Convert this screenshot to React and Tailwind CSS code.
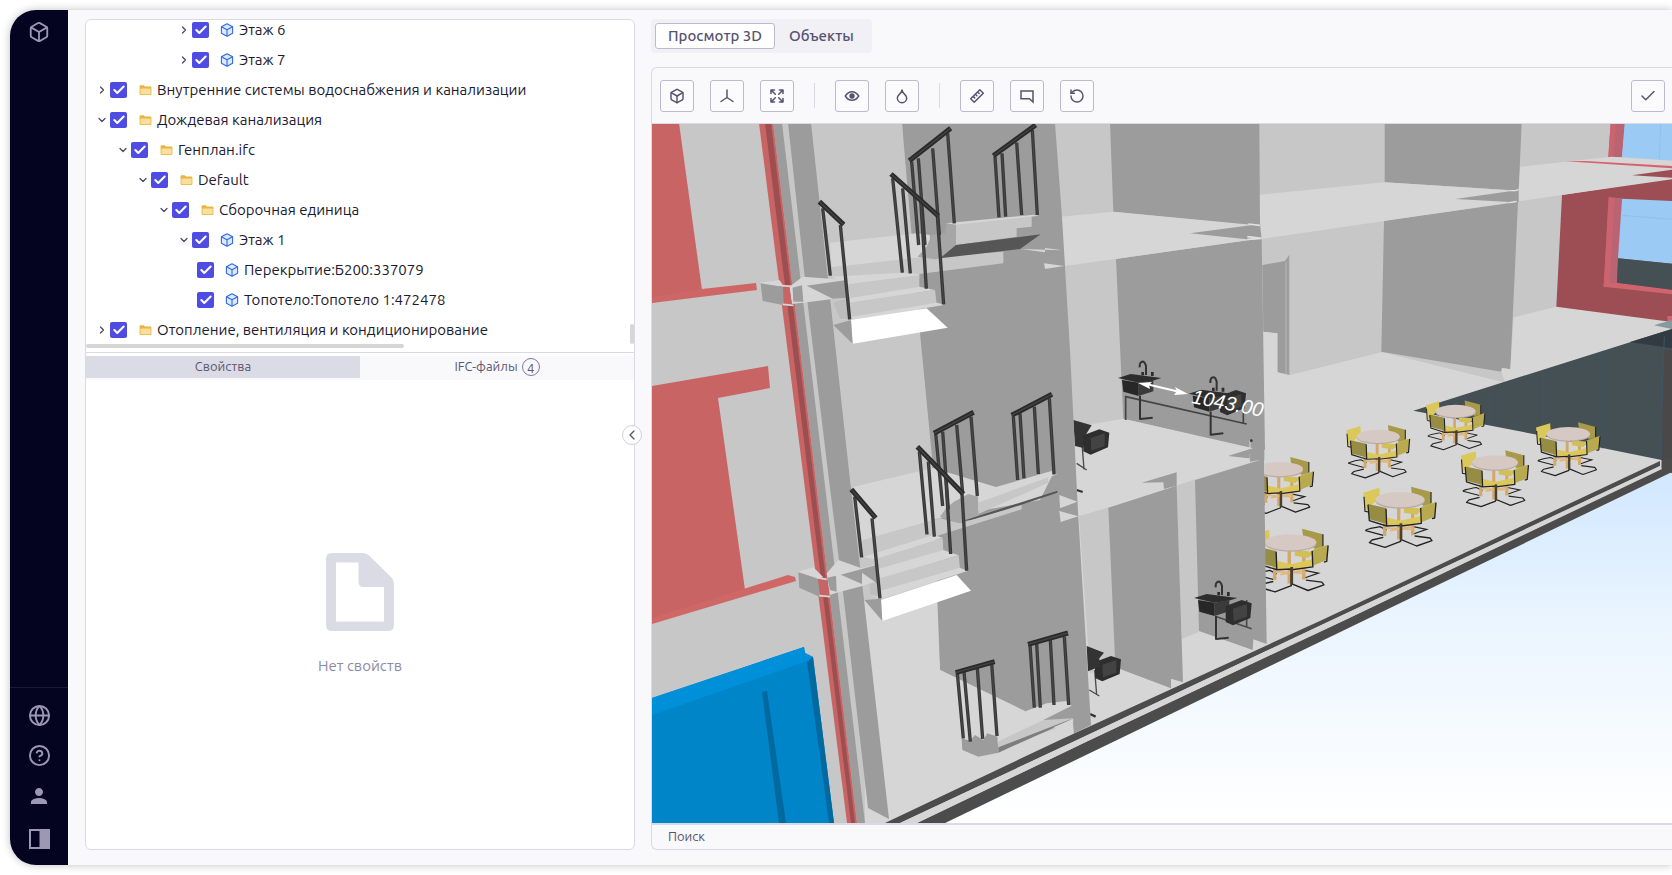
import { Box, Check, ChevronDown, ChevronLeft, ChevronRight, CircleHelp, Droplet, Globe, RotateCcw } from "lucide-react";
import { MdPerson } from "react-icons/md";

const INDENT = ["pl-[10px]", "pl-[31px]", "pl-[51px]", "pl-[72px]", "pl-[92px]", "pl-[111px]"];

const ROWS = [
  { level: 4, open: false, kind: "cube", label: "Этаж 6" },
  { level: 4, open: false, kind: "cube", label: "Этаж 7" },
  { level: 0, open: false, kind: "folder", label: "Внутренние системы водоснабжения и канализации" },
  { level: 0, open: true, kind: "folder", label: "Дождевая канализация" },
  { level: 1, open: true, kind: "folder", label: "Генплан.ifc" },
  { level: 2, open: true, kind: "folder", label: "Default" },
  { level: 3, open: true, kind: "folder", label: "Сборочная единица" },
  { level: 4, open: true, kind: "cube", label: "Этаж 1" },
  { level: 5, leaf: true, kind: "cube", label: "Перекрытие:Б200:337079" },
  { level: 5, leaf: true, kind: "cube", label: "Топотело:Топотело 1:472478" },
  { level: 0, open: false, kind: "folder", label: "Отопление, вентиляция и кондиционирование" },
];

function FolderIcon() {
  return (
    <svg viewBox="0 0 13 12" className="h-3 w-[13px]">
      <path d="M.6 2.2Q.6 1.2 1.6 1.2H4.6L6 2.6H11.4Q12.4 2.6 12.4 3.6V10Q12.4 11 11.4 11H1.6Q.6 11 .6 10Z" fill="#e9b440" />
      <path d="M2.6 4.6H11.6V10.2H1.4V5.8Q1.4 4.6 2.6 4.6Z" fill="#f8df9d" />
    </svg>
  );
}

function CubeIcon() {
  return (
    <svg viewBox="0 0 14 14" className="h-[14px] w-[14px]" stroke="#3268e0" strokeWidth="1.1" strokeLinejoin="round">
      <path d="M7 .8L12.6 3.8V10.2L7 13.2L1.4 10.2V3.8Z" fill="#dbeafe" />
      <path d="M1.4 3.8L7 6.8L12.6 3.8M7 6.8V13.2" fill="none" />
    </svg>
  );
}

function TreeRow({ row, index }) {
  const id = "node-" + index;
  const Chevron = row.open ? ChevronDown : ChevronRight;
  return (
    <li className={"flex h-[30px] items-center " + INDENT[row.level]}>
      {row.leaf ? null : (
        <button type="button" aria-label="Развернуть" className="mr-0.5 grid h-4 w-3 place-items-center text-[#4a4766]">
          <Chevron className="h-3 w-3" strokeWidth={2.5} />
        </button>
      )}
      <span className="grid h-4 w-[17px] place-items-center">
        <input id={id} type="checkbox" defaultChecked className="col-start-1 row-start-1 h-4 w-[17px] appearance-none rounded-[2px] bg-[#4f4ce4]" />
        <Check className="pointer-events-none col-start-1 row-start-1 h-[14px] w-[14px] text-white" strokeWidth={3.5} />
      </span>
      <label htmlFor={id} className="ml-2.5 flex items-center gap-1 whitespace-nowrap text-[15px] text-[#1c1a30]">
        <span className="grid w-4 place-items-center">{row.kind === "folder" ? <FolderIcon /> : <CubeIcon />}</span>
        {row.label}
      </label>
    </li>
  );
}

function ToolButton({ label, children }) {
  return (
    <button type="button" aria-label={label} className="grid h-8 w-[34px] shrink-0 place-items-center rounded-[3px] border border-[#bdbad0] bg-[#fbfbfd] text-[#56536f]">
      {children}
    </button>
  );
}

const STROKE = { fill: "none", stroke: "currentColor", strokeWidth: 1.5, strokeLinecap: "round", strokeLinejoin: "round" };

function AxesIcon() {
  return <svg viewBox="0 0 16 16" className="h-4 w-4" {...STROKE}><path d="M8 2V9.500L2 13.500M8 9.500L14 13.500" /></svg>;
}
function FitIcon() {
  return (
    <svg viewBox="0 0 16 16" className="h-4 w-4" {...STROKE}>
      <path d="M2 5.5V2H5.5M10.5 2H14V5.5M14 10.5V14H10.5M5.5 14H2V10.5M2.3 2.3L6.3 6.3M13.7 2.3L9.7 6.3M2.3 13.7L6.3 9.7M13.7 13.7L9.7 9.7" />
    </svg>
  );
}
function EyeIcon() {
  return (
    <svg viewBox="0 0 16 16" className="h-4 w-4" {...STROKE}>
      <path d="M1.3 8Q4 3.7 8 3.7T14.7 8Q12 12.3 8 12.3T1.3 8Z" />
      <circle cx="8" cy="8" r="1.9" fill="currentColor" />
    </svg>
  );
}
function RulerIcon() {
  return (
    <svg viewBox="0 0 16 16" className="h-4 w-4" {...STROKE}>
      <path d="M1.7 10.8L10.8 1.7L14.3 5.2L5.2 14.3ZM4.2 8.4L5.7 9.9M6.4 6.2L7.9 7.7M8.6 4L10.1 5.5" />
    </svg>
  );
}
function NoteIcon() {
  return <svg viewBox="0 0 16 16" className="h-4 w-4" {...STROKE}><path d="M2 3H14V14L10.5 10.8H2Z" strokeLinejoin="miter" /></svg>;
}

function P({ d, f }) {
  return <polygon points={d} fill={f} />;
}
const L = "#c7c7c7";
const F = "#d6d6d6";
const D = "#9c9c9c";

const TABLES = [
  [617, 334, 0.81], [955, 402, 0.88], [385, 410, 0.87], [735, 488, 0.93],
  [90, 508, 0.93], [450, 600, 1], [122, 728, 1.04],
];

function Table({ x, y, s }) {
  return (
    <g transform={"translate(" + x + " " + y + ") scale(" + s + ")"}>
      <P d="-110,-22 -62,-37 -60,-8 -104,32" f="#dcc85a" />
      <P d="33,-40 93,-24 92,12 70,18 36,-16" f="#a89a48" />
      <path d="M-108 -10L-105 34L-75 40M93 -24V10M-103 92Q-106 88 -60 80L-40 90M-103 92L-50 106M40 80L80 88L40 102" fill="none" stroke="#222" strokeWidth="3.5" />
      <path d="M-46 30V108M-4 20V118M38 30V106" stroke="#d3a869" strokeWidth="10" />
      <path d="M-40 84L40 88M-30 92L36 80" stroke="#e0b679" strokeWidth="5" />
      <P d="-40,52 0,62 2,76 -40,78 -46,60" f="#dcc85a" />
      <P d="0,62 62,48 66,68 4,78" f="#dcc85a" />
      <P d="12,22 70,26 50,44 12,38" f="#d2bf55" />
      <ellipse cx="0" cy="3" rx="74" ry="23" fill="#b9aca6" />
      <ellipse cx="0" cy="-1" rx="74" ry="23" fill="#d6c9c3" />
      <P d="-96,12 -42,24 -40,72 -92,58" f="#978c44" />
      <P d="62,22 108,6 104,50 66,66" f="#b9aa50" />
      <path d="M-96 14L-92 62L-40 78L2 76V124L-45 142L-92 128L-84 120L-50 112M-42 26L-40 76M62 24L64 70L4 78M108 8L104 54L96 56M2 118L50 138L96 122L90 114L44 108" fill="none" stroke="#222" strokeWidth="4" strokeLinejoin="round" />
      <path d="M3 70V122" stroke="#4a3f30" strokeWidth="8" />
    </g>
  );
}

function Rail({ bar, posts }) {
  return (
    <g fill="none">
      <path d={posts} stroke="#383838" strokeWidth="10" />
      <path d={posts} stroke="#525252" strokeWidth="2" />
      <path d={bar} stroke="#2a2a2a" strokeWidth="15" />
      <path d={bar} stroke="#444" strokeWidth="4" />
    </g>
  );
}

function Sink({ x, y }) {
  return (
    <g transform={"translate(" + x + " " + y + ")"}>
      <path d="M120 138V207L158 203M138 75V48Q134 31 124 36Q118 40 119 52" fill="none" stroke="#333" strokeWidth="6" strokeLinejoin="round" />
      <P d="54,84 92,72 184,84 158,92 116,98" f="#2d2d2d" />
      <P d="66,90 116,98 116,138 70,125" f="#272727" />
      <P d="116,98 160,90 160,124 116,138" f="#3b3b3b" />
      <path d="M128 76V66M157 78V66" stroke="#2b2b2b" strokeWidth="8" />
    </g>
  );
}

function SmallBasin({ x, y }) {
  return (
    <g transform={"translate(" + x + " " + y + ")"}>
      <P d="0,18 48,0 78,10 74,54 22,76 0,66" f="#2e2e2e" />
      <P d="22,26 64,12 64,50 24,64" f="#434343" />
    </g>
  );
}

function Scene() {
  return (
    <svg viewBox="652 124 1020 699" preserveAspectRatio="xMinYMin slice" className="h-full w-full" role="img" aria-label="3D-модель здания">
      <defs>
        <linearGradient id="sky" x1="0" y1="0" x2="0" y2="1">
          <stop offset="0.45" stopColor="#cbe4ff" />
          <stop offset="0.72" stopColor="#ebf5ff" />
          <stop offset="1" stopColor="#ffffff" />
        </linearGradient>
      </defs>
      <rect x="652" y="123" width="1020" height="700" fill="url(#sky)" />
      <P d="652,123 1672,123 1672,470 945,823 652,823" f={L} />
      <P d="1264,330 1278,333 1278,372 1290,375 1382,352 1514,385 1514,318 1557,307 1672,321 1672,472 945,823 865,823 864,600 935,600 1091,500" f={F} />

      <g transform="translate(1372 120) scale(.33333)">
        <P d="38,9 449,9 440,212 38,187" f={D} />
        <P d="36,302 438,246 415,748 390,743 388,755 28,695" f={D} />
        <P d="425,592 553,560 900,605 900,640 400,790 388,756 390,744 415,748" f={F} />
        <P d="570,225 900,174 900,606 553,560" f="#9c4e54" />
        <P d="710,232 750,235 735,490 695,500" f="#b86472" />
        <P d="710,232 728,233 713,494 695,500" f="#cb6470" />
        <P d="695,488 735,488 900,509 900,523 695,500" f="#cf646f" />
        <P d="750,236 900,243 900,431 738,415" f="#9bcbf5" />
        <path d="M750 286L900 298" stroke="#8abde0" strokeWidth="2" />
        <P d="738,415 900,431 900,509 735,488" f="#455055" />
        <P d="716,9 760,9 750,112 709,112" f="#b86472" />
        <P d="716,9 732,9 724,112 709,112" f="#cb6470" />
        <P d="758,9 900,9 900,122 750,112" f="#9bcbf5" />
        <path d="M866 9L862 118" stroke="#8abde0" strokeWidth="2" />
        <P d="-345,225 36,187 440,212 445,140 720,110 900,122 900,178 570,225 445,243 -330,357" f={F} />
        <P d="250,237 440,210 440,246 415,246" f={D} />
        <path d="M415 212H430L440 209M412 248L434 244" fill="none" stroke="#e4e4e4" strokeWidth="4" />
        <P d="580,124 640,123 900,138 900,145" f="#d9616c" />
        <P d="780,166 900,149 900,173" f="#9c4e54" />
        <P d="886,588 900,588 900,604 886,604" f="#cf646f" />
      </g>

      <g transform="translate(1250 300) scale(.33333)">
        <P d="490,332 1266,87 1266,520 1235,505 1235,480 850,402" f="#455055" />
        <P d="1140,126 1266,87 1266,145" f="#323a42" />
        <P d="1240,150 1266,150 1266,517 1235,508" f="#4a4848" />
        <P d="1212,76 1266,60 1266,87" f="#87989f" />
        <path d="M718 262V375M880 212V405M1056 155V445M1243 110L1230 470" stroke="#3b5666" strokeWidth="3" />
        {TABLES.map((t) => <Table key={t[0]} x={t[0]} y={t[1]} s={t[2]} />)}
      </g>

      <g transform="translate(1030 120) scale(.33333)">
        <P d="697,435 765,423 778,405 779,765 742,757 742,640 700,635" f={D} />
        <path d="M768 425V764M778 405V765" stroke="#b9b9b9" strokeWidth="3" />
        <P d="700,636 742,640 742,757 775,766 775,830 703,830" f={F} />
        <P d="75,9 242,9 250,275 92,290" f={L} />
        <P d="240,9 688,9 690,315 650,315 250,275" f={D} />
        <P d="105,438 258,417 282,900 130,925" f={L} />
        <P d="258,417 695,355 705,990 660,985 280,897" f={D} />
        <P d="92,290 250,275 640,312 692,316 697,355 105,438" f={F} />
        <P d="480,340 690,312 695,357 650,358" f={D} />
        <path d="M655 312L690 316M652 350L695 355L652 358" fill="none" stroke="#e0e0e0" strokeWidth="5" />
        <P d="130,922 280,896 703,992 706,1060 400,1200 140,1320" f={F} />
        <P d="595,1008 703,975 703,1020" f={D} />
        <path d="M660 962V1025" stroke="#d8d8d8" strokeWidth="3" />
        <circle cx="664" cy="962" r="4" fill="#333" />
      </g>

      <g transform="translate(1060 440) scale(.33333)">
        <P d="57,228 147,202 167,683 90,700" f={L} />
        <P d="350,137 407,118 418,575 365,597" f={L} />
        <P d="145,203 350,137 369,727 333,716 333,745 180,687 166,680" f={D} />
        <P d="405,120 612,56 620,612 580,598 578,630 417,573" f={D} />
        <P d="245,128 350,97 350,137 312,147 310,127" f={D} />
        <P d="505,48 612,14 612,58 570,65 568,40" f={D} />
        <path d="M470 530L575 566M560 560V480" stroke="#4a4a4a" strokeWidth="5" fill="none" />
        <Sink x={348} y={390} />
        <SmallBasin x={497} y={480} />
        <path d="M88 750L118 768M104 690L110 765" stroke="#4a4a4a" strokeWidth="4" fill="none" />
        <SmallBasin x={105} y={648} />
        <P d="80,618 132,638 118,655 118,680 84,694" f="#333" />
        <path d="M90 822L107 830" stroke="#333" strokeWidth="7" />
        <path d="M50 70L80 90M66 10L72 88" stroke="#4a4a4a" strokeWidth="4" fill="none" />
        <P d="40,-60 95,-44 80,-20 70,24 45,18" f="#333" />
        <SmallBasin x={70} y={-32} />
        <path d="M50 150L68 156" stroke="#333" strokeWidth="7" />
      </g>

      <g transform="translate(1100 350) scale(.33333)">
        <path d="M77 210V140L440 222M430 130V220" fill="none" stroke="#444" strokeWidth="5" />
        <Sink x={0} y={0} />
        <Sink x={212} y={47} />
        <SmallBasin x={360} y={120} />
      </g>

      <P d="902,123 1055,123 1062,217 1070,350 1078,512 1091,725 1073,734 1025,712 940,670 932,457 920,333" f={D} />
      <P d="864,600 934,600 940,670 1025,711 1073,733 885,823 867,823" f={F} />
      <P d="853,487 933,468 996,487 1055,470 1040,500 940,518 862,541" f={F} />
      <P d="811,123 902,123 907,234 830,243" f={L} />
      <P d="788,123 811,123 833,325 850,480 864,600 889,819 868,808 843,592 829,480 808,307" f={D} />
      <P d="773,123 782,123 865,823 857,823" f={D} />
      <P d="759,123 773,123 857,823 847,823" f="#c86464" />
      <P d="765,123 771,123 855,823 851,823" f="#9c4e50" />

      <P d="652,123 679,123 702,290 652,303" f="#c86464" />
      <P d="652,297 702,289 756,283 757,290 652,303" f="#cf6666" />
      <P d="652,386 768,366 770,388 718,398 745,590 652,622" f="#c86464" />
      <P d="652,618 788,575 795,577 796,581 652,624" f="#d06767" />
      <P d="652,698 804,647 805,653 813,657 834,823 652,823" f="#0085c9" />
      <P d="652,698 804,647 805,653 813,657 807,661 652,715" f="#0090d9" />
      <P d="807,662 813,657 834,823 829,823" f="#00699f" />
      <P d="762,692 767,691 786,823 779,823" f="#00699f" />

      <g transform="translate(650 120) scale(.33333)">
        <P d="540,368 800,340 840,345 840,415 545,442" f={F} />
        <P d="545,442 800,413 1060,395 1060,430 808,462 597,490 545,470" f={L} />
        <P d="545,470 755,458 808,462 808,472 597,495" f={F} />
        <P d="597,492 808,465 808,502 597,538" f={L} />
        <P d="597,535 808,500 855,510 597,550" f={F} />
        <P d="597,548 855,510 860,552 597,598" f={L} />
        <P d="570,598 597,592 860,548 885,554 605,602" f={F} />
        <P d="550,548 600,532 600,600 570,596" f="#bdbdbd" />
        <P d="603,600 830,565 893,623 608,671" f="#fff" />
        <P d="550,615 603,600 608,671" f={D} />
        <P d="803,410 830,380 845,345 885,340 890,310 918,312 918,375 870,415 855,418" f="#a6a6a6" />
        <P d="918,312 1145,288 1145,320 1100,325 1100,350 918,375" f={L} />
        <P d="888,310 1150,284 1168,287 918,314" f={F} />
        <P d="870,415 918,375 1172,343 1110,387" f="#565656" />
        <P d="1112,387 1185,397 1185,384 1238,391" f={F} />
        <P d="1182,430 1243,438 1185,447" f={F} />
        <P d="330,488 388,480 402,500 335,492" f={F} />
        <P d="332,490 400,501 402,556 338,543" f={D} />
        <P d="418,500 458,470 592,480 600,530 460,548 425,552" f={F} />
        <P d="428,503 456,496 460,545 430,545" f={D} />
        <P d="470,497 590,480 592,533 548,536" f={D} />
        <P d="399,500 418,500 426,553 402,553" f="#c86464" />
        <path d="M395 497L425 499M398 553L430 556" stroke={F} strokeWidth="5" />
        <Rail bar="M778 122L902 25" posts="M785 125L806 375M805 115L825 375M848 85L868 345M893 40L913 310" />
        <Rail bar="M1030 107L1157 15" posts="M1035 110L1047 292M1056 100L1067 290M1100 68L1115 285M1147 30L1162 285" />
        <Rail bar="M508 245L581 314" posts="M518 265L541 467M571 315L599 598" />
        <Rail bar="M723 162L865 288" posts="M728 175L757 458M758 205L781 460M812 240L829 506M862 288L881 553" />
      </g>

      <g transform="translate(650 440) scale(.33333)">
        <P d="870,230 888,205 912,185 955,162 985,170 985,228 930,250" f="#a6a6a6" />
        <P d="985,170 1190,98 1222,103 985,190" f={F} />
        <P d="985,188 1195,112 1195,128 985,222" f={L} />
        <P d="935,244 1222,152 1222,158 985,237" f="#565656" />
        <P d="638,300 870,235 930,250 1115,195 1115,208 870,285 680,355" f={L} />
        <P d="640,350 850,285 878,293 680,360" f={F} />
        <P d="675,358 878,294 880,332 685,390" f={L} />
        <P d="685,387 880,330 926,346 690,418" f={F} />
        <P d="690,415 926,346 930,386 692,460" f={L} />
        <P d="662,465 692,452 930,383 952,393 692,478" f={F} />
        <P d="658,432 690,425 692,472 662,465" f="#bdbdbd" />
        <P d="693,480 920,405 963,452 697,543" f="#fff" />
        <P d="643,480 693,476 697,543" f={D} />
        <P d="443,395 490,382 520,412 505,417" f={F} />
        <P d="445,397 505,416 512,472 448,443" f={D} />
        <P d="530,400 565,360 635,385 680,373 686,420 640,437 560,458 540,465" f={F} />
        <P d="532,413 558,407 560,455 540,450" f={D} />
        <P d="572,404 680,375 684,432 636,398 636,432" f={D} />
        <P d="504,418 528,412 537,468 510,465" f="#c86464" />
        <path d="M500 413L530 418M508 467L540 470" stroke={F} strokeWidth="5" />
        <P d="1228,165 1282,185 1230,205" f={F} />
        <P d="1228,213 1285,229 1232,246" f={F} />
        <P d="935,895 960,902 975,885 1000,900 1012,880 1043,890 1045,938 985,950 937,930" f={D} />
        <P d="1043,888 1130,812 1190,790 1250,783 1265,797 1180,840 1043,908" f={F} />
        <P d="1043,905 1180,840 1270,835 1270,848 1045,925" f={L} />
        <P d="1045,922 1270,835 1215,862 1045,938" f="#7d7d7d" />
        <P d="1210,862 1268,838 1272,884" f={F} />
        <g transform="translate(0 -960)">
          <Rail bar="M852 940L971 877" posts="M857 940L878 1158M878 935L895 1168M920 915L938 1120M963 890L982 1128" />
          <Rail bar="M1085 886L1206 823" posts="M1090 890L1103 1080M1110 880L1122 1075M1153 860L1165 1062M1198 835L1212 1063" />
        </g>
        <Rail bar="M604 148L677 234" posts="M614 170L635 352M666 235L690 475" />
        <Rail bar="M802 20L940 162" posts="M808 35L831 283M835 65L853 290M887 110L902 342M936 160L950 392" />
        <Rail bar="M917 698L1034 665" posts="M922 700L940 895M942 695L961 905M982 685L998 897M1025 670L1041 888" />
        <Rail bar="M1134 613L1254 579" posts="M1140 615L1153 803M1160 612L1171 803M1201 600L1212 795M1243 590L1256 795" />
      </g>

      <P d="885,823 1060,740 1322,620 1660,461 1660,466 1332,620 1077,740 900,823" f="#4c4c4c" />
      <P d="917,823 1090,740 1345,620 1662,468 1662,460 1672,458 1672,472 1365,620 1117,740 945,823" f="#4c4c4c" />
      <P d="900,823 1077,740 1332,620 1660,466 1662,469 1345,620 1090,740 917,823" f={F} />

      <path d="M1146 384L1180 392" stroke="#fff" strokeWidth="2" />
      <P d="1138,383 1152,382 1149,385 1150,389" f="#fff" />
      <P d="1188,394 1174,395 1177,391 1175,387" f="#fff" />
      <text x="1191" y="403" transform="rotate(11 1191 403)" fill="#fff" className="font-['Ubuntu_Condensed','Liberation_Sans',sans-serif] text-[20px] italic">1043.00</text>
    </svg>
  );
}

export default function App() {
  return (
    <div className="h-screen overflow-hidden bg-white py-2.5 pl-2.5 font-['Ubuntu','Noto_Sans',sans-serif]">
      <div className="flex h-full overflow-hidden rounded-l-[26px] bg-[#f9f9fc] shadow-[0_0_8px_rgba(0,0,0,0.25)]">
        <nav className="flex w-[58px] shrink-0 flex-col items-center bg-[#040420] text-[#9a98b3]">
          <a href="#model" aria-label="Модели" className="mt-[11px]"><Box className="h-[22px] w-[22px]" strokeWidth={2} /></a>
          <div className="mt-auto flex w-full flex-col items-center border-t border-[#1b1a37] pb-[16px] pt-[16px]">
            <button type="button" aria-label="Язык" className="grid h-10 place-items-start"><Globe className="h-[23px] w-[23px]" strokeWidth={2} /></button>
            <button type="button" aria-label="Справка" className="grid h-10 place-items-start"><CircleHelp className="h-[23px] w-[23px]" strokeWidth={2} /></button>
            <button type="button" aria-label="Профиль" className="grid h-[45px] place-items-start"><MdPerson className="h-6 w-6" /></button>
            <button type="button" aria-label="Панель">
              <svg viewBox="0 0 21 20" className="h-5 w-[21px]"><path d="M0 0H21V20H0ZM2 2V18H10.5V2Z" fill="currentColor" fillRule="evenodd" /></svg>
            </button>
          </div>
        </nav>

        <main className="flex min-w-0 flex-1 gap-4 pb-[15px] pl-[17px] pt-[9px]">
          <section className="relative flex w-[550px] shrink-0 flex-col rounded-md border border-[#dbdae4] bg-white">
            <div className="relative h-[333px] shrink-0 overflow-hidden border-b border-[#dbdae4]">
              <ul className="-mt-[5px]">
                {ROWS.map((row, i) => <TreeRow key={row.label} row={row} index={i} />)}
              </ul>
              <span className="absolute bottom-1 left-0 h-1 w-[318px] rounded-sm bg-[#d6d6d6]" />
              <span className="absolute bottom-2 right-0 h-5 w-1 rounded-sm bg-[#d6d6d6]" />
            </div>
            <div className="mt-[3px] grid h-6 shrink-0 grid-cols-2 bg-[#f9f9fc] text-[13px] text-[#5a5774]">
              <button type="button" className="h-[22px] bg-[#dbdbe5]">Свойства</button>
              <button type="button" className="flex h-[22px] items-center justify-center gap-1">
                IFC-файлы
                <span className="grid h-[18px] w-[18px] place-items-center rounded-full border border-[#7d7a96]">4</span>
              </button>
            </div>
            <div className="flex flex-1 flex-col items-center justify-center gap-[25px]">
              <svg viewBox="0 0 68 78" className="h-[78px] w-[68px]">
                <path d="M6 0H37Q41 0 43 2.5L65 24Q68 27 68 31V72Q68 78 62 78H6Q0 78 0 72V6Q0 0 6 0ZM10 9.5V68.5H58V34H38Q32.5 34 32.5 28.5V9.5Z" fill="#dbdbe5" fillRule="evenodd" />
              </svg>
              <p className="text-[15px] leading-5 text-[#8d8aa6]">Нет свойств</p>
            </div>
            <button type="button" aria-label="Свернуть панель" className="absolute -right-2 top-[405px] grid h-5 w-5 place-items-center rounded-full border border-[#d0cedd] bg-white text-[#56536f]">
              <ChevronLeft className="h-4 w-4" />
            </button>
          </section>

          <section className="flex min-w-0 flex-1 flex-col">
            <div className="flex h-[34px] w-fit items-center rounded bg-[#f1f0f5] px-1 text-[15px] font-medium text-[#56536f]">
              <button type="button" className="h-[26px] rounded-[3px] border border-[#bdbad0] bg-white px-3">Просмотр 3D</button>
              <button type="button" className="h-[26px] px-[14px]">Объекты</button>
            </div>
            <div className="mt-[14px] flex min-h-0 flex-1 flex-col overflow-hidden rounded-l-md border border-r-0 border-[#dbdae4]">
              <div className="flex h-14 shrink-0 items-center gap-4 border-b border-[#dbdae4] pl-2 pr-[7px]">
                <ToolButton label="Вид"><Box className="h-4 w-4" strokeWidth={2.2} /></ToolButton>
                <ToolButton label="Оси"><AxesIcon /></ToolButton>
                <ToolButton label="Показать всё"><FitIcon /></ToolButton>
                <span className="mx-1 h-[25px] w-px bg-[#dbdae4]" />
                <ToolButton label="Видимость"><EyeIcon /></ToolButton>
                <ToolButton label="Цвет"><Droplet className="h-4 w-4" strokeWidth={2.2} /></ToolButton>
                <span className="mx-1 h-[25px] w-px bg-[#dbdae4]" />
                <ToolButton label="Измерить"><RulerIcon /></ToolButton>
                <ToolButton label="Замечание"><NoteIcon /></ToolButton>
                <ToolButton label="Сбросить"><RotateCcw className="h-4 w-4" strokeWidth={2.2} /></ToolButton>
                <span className="ml-auto"><ToolButton label="Применить"><Check className="h-[18px] w-[18px]" /></ToolButton></span>
              </div>
              <div className="min-h-0 flex-1"><Scene /></div>
              <button type="button" className="h-[26px] shrink-0 border-t-2 border-[#dbdae4] px-4 text-left text-[13px] text-[#56536f]">Поиск</button>
            </div>
          </section>
        </main>
      </div>
    </div>
  );
}
